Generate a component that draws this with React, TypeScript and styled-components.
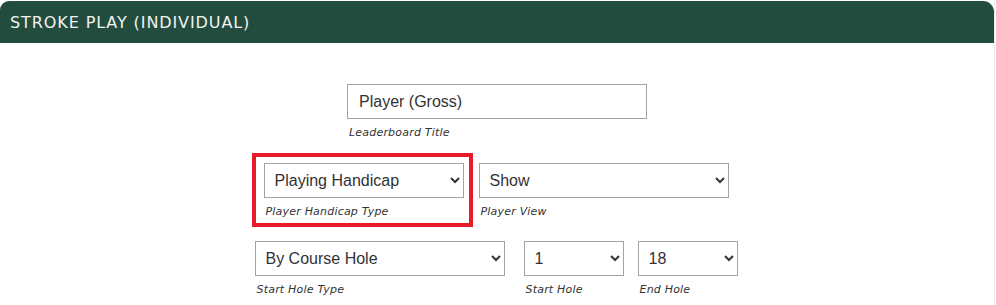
import React from 'react';
import styled, { createGlobalStyle } from 'styled-components';

const GlobalStyle = createGlobalStyle`
    html, body {
        margin: 0;
        padding: 0;
        background: #fff;
    }
    body {
        font-family: 'Liberation Sans', Arial, sans-serif;
    }
`;

const Page = styled.div`
    width: 995px;
    height: 305px;
    border-right: 1px solid #ececec;
    padding-top: 1px;
    box-sizing: border-box;
    overflow: hidden;
`;

const Panel = styled.div`
    width: 994px;
`;

const PanelHeader = styled.div`
    background: #224c3d;
    color: #f2f2f2;
    height: 42px;
    border-radius: 9px 11px 0 0;
    box-sizing: border-box;
    padding: 0 10px;
    display: flex;
    align-items: center;
    font-family: 'DejaVu Sans', Verdana, sans-serif;
    font-size: 16px;
    letter-spacing: 0.9px;
`;

const PanelBody = styled.div`
    display: flex;
    flex-direction: column;
    align-items: center;
    padding-top: 41px;
    gap: 14px;
`;

const Row = styled.div<{ $shift?: number }>`
    display: flex;
    align-items: center;
    gap: 14px;
    padding-right: ${({ $shift = 0 }) => $shift}px;
`;

const Field = styled.div<{ $width: number; $after?: number }>`
    display: flex;
    flex-direction: column;
    width: ${({ $width }) => $width}px;
    margin-right: ${({ $after = 0 }) => $after}px;
`;

const TextInput = styled.input`
    width: 100%;
    height: 35px;
    box-sizing: border-box;
    border: 1px solid #a3a3a3;
    border-radius: 0;
    padding: 0 11px;
    font-family: 'Liberation Sans', Arial, sans-serif;
    font-size: 16px;
    color: #333;
    outline: none;
`;

const Select = styled.select`
    width: 100%;
    height: 35px;
    box-sizing: border-box;
    border: 1px solid #a3a3a3;
    border-radius: 0;
    padding: 0 6px;
    background: #fff;
    font-family: 'Liberation Sans', Arial, sans-serif;
    font-size: 16px;
    color: #333;
    outline: none;
`;

const Label = styled.div`
    margin-top: 7px;
    padding-left: 2px;
    height: 13px;
    line-height: 13px;
    font-family: 'DejaVu Sans', Verdana, sans-serif;
    font-style: italic;
    font-size: 11px;
    letter-spacing: 0.2px;
    color: #333;
    white-space: nowrap;
`;

const Highlight = styled.div`
    border: 4px solid #e81b2a;
    padding: 6px 5px 5px 8px;
    margin-right: -8px;
`;

interface SelectFieldProps {
    label: string;
    value: string;
    options: string[];
    width: number;
    after?: number;
}

const SelectField = ({ label, value, options, width, after }: SelectFieldProps) => (
    <Field $width={width} $after={after}>
        <Select defaultValue={value}>
            {options.map((o) => (
                <option key={o} value={o}>
                    {o}
                </option>
            ))}
        </Select>
        <Label>{label}</Label>
    </Field>
);

const holes = Array.from({ length: 18 }, (_, i) => String(i + 1));

const App = () => (
    <>
        <GlobalStyle />
        <Page>
            <Panel>
                <PanelHeader>STROKE PLAY (INDIVIDUAL)</PanelHeader>
                <PanelBody>
                    <Row>
                        <Field $width={300}>
                            <TextInput defaultValue="Player (Gross)" />
                            <Label>Leaderboard Title</Label>
                        </Field>
                    </Row>
                    <Row $shift={14}>
                        <Highlight>
                            <SelectField
                                label="Player Handicap Type"
                                value="Playing Handicap"
                                options={['Playing Handicap', 'Course Handicap', 'Handicap Index']}
                                width={200}
                            />
                        </Highlight>
                        <SelectField
                            label="Player View"
                            value="Show"
                            options={['Show', 'Hide']}
                            width={250}
                        />
                    </Row>
                    <Row $shift={2}>
                        <SelectField
                            label="Start Hole Type"
                            value="By Course Hole"
                            options={['By Course Hole', 'By Tee Time']}
                            width={250}
                            after={5}
                        />
                        <SelectField label="Start Hole" value="1" options={holes} width={100} />
                        <SelectField label="End Hole" value="18" options={holes} width={100} />
                    </Row>
                </PanelBody>
            </Panel>
        </Page>
    </>
);

export default App;
